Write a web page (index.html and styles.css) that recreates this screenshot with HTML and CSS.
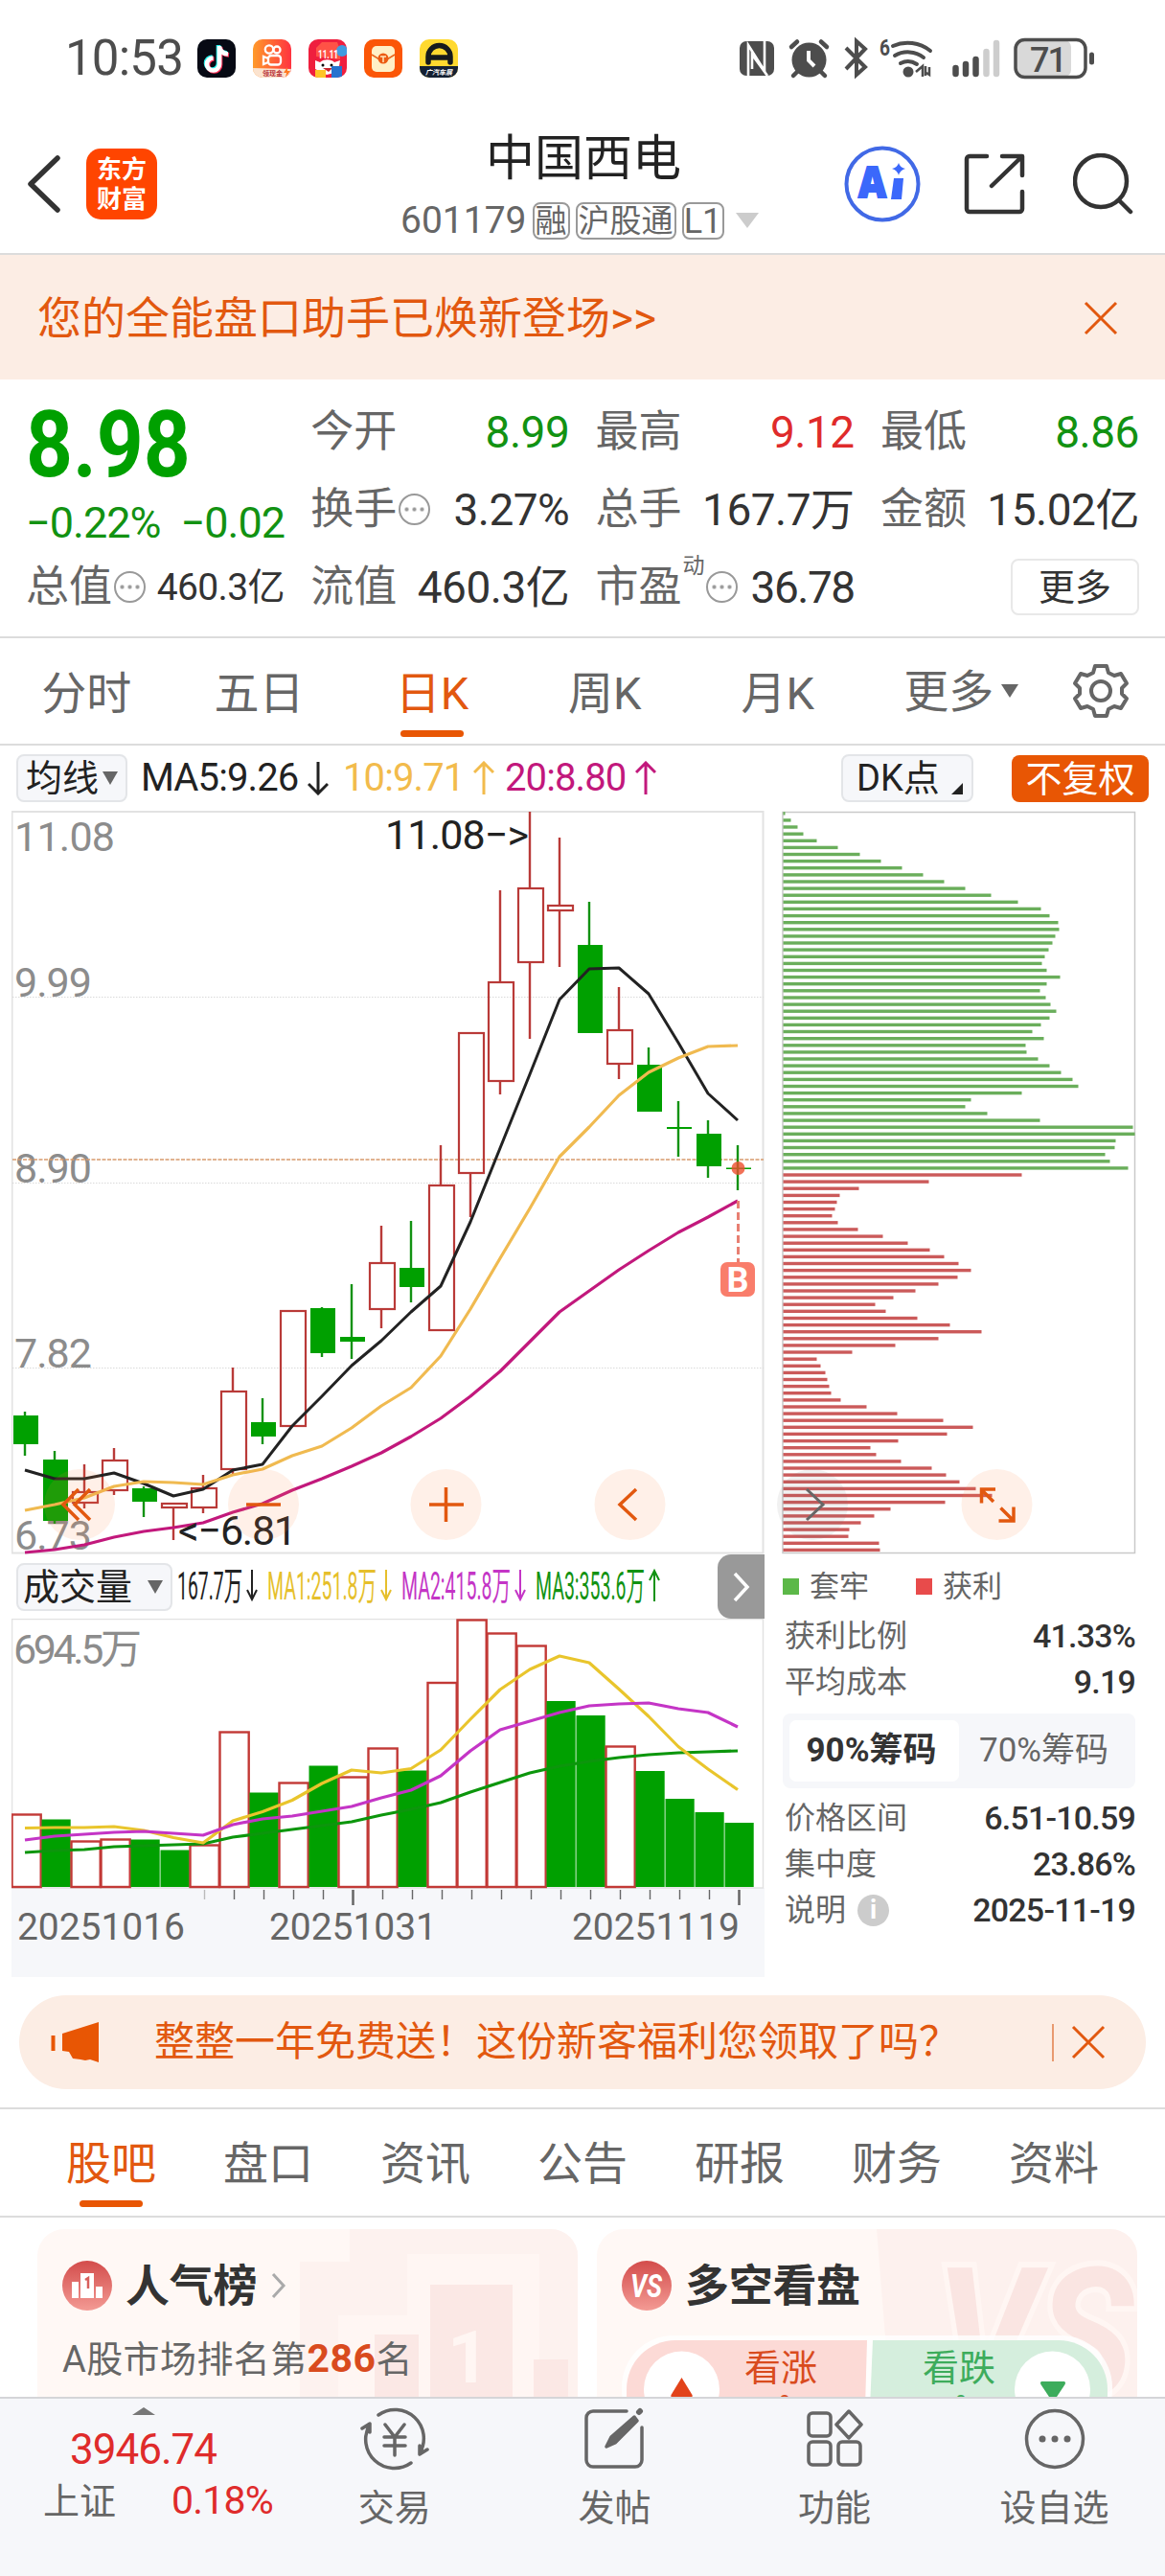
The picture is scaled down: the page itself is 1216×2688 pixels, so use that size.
FILE: index.html
```html
<!DOCTYPE html>
<html lang="zh-CN">
<head>
<meta charset="utf-8">
<title>中国西电 601179</title>
<link rel="stylesheet" href="styles.css">
</head>
<body>
<div class="status">
  <span class="clock">10:53</span>
  <div class="apps">
    <svg width="40" height="40" viewBox="0 0 40 40"><rect width="40" height="40" rx="10" fill="#070a14"/><g fill="none" stroke-width="4.6"><path d="M22 6v19a6.500 6.500 0 1 1-6.500-6.500M22 7c1 5 4 7 9 7.500" stroke="#25f4ee"/><path d="M24 8v19a6.500 6.500 0 1 1-6.500-6.500M24 9c1 5 4 7 9 7.500" stroke="#fe2c55"/><path d="M23 7v19a6.500 6.500 0 1 1-6.500-6.500M23 8c1 5 4 7 9 7.500" stroke="#fff"/></g></svg>
    <svg width="40" height="40" viewBox="0 0 40 40"><defs><linearGradient id="ks"><stop offset="0" stop-color="#ff9a2a"/><stop offset="1" stop-color="#ff3340"/></linearGradient><clipPath id="r"><rect width="40" height="40" rx="10"/></clipPath></defs><g clip-path="url(#r)"><rect width="40" height="40" fill="url(#ks)"/><path d="M0 30l40 1v9H0z" fill="#fbe3cf"/></g><g fill="none" stroke="#fff" stroke-width="2.300"><circle cx="17" cy="10.500" r="4.200"/><circle cx="25" cy="11" r="3.500"/><rect x="16" y="17" width="13" height="9.500" rx="3"/><path d="M16 20l-5-2v8l5-2"/></g><text x="10" y="38" font-size="7" font-weight="700" fill="#b8323a">领现金</text><path d="M36 29l-4 6h3l-1 5 5-7h-3z" fill="#ff7a22"/></svg>
    <svg width="40" height="40" viewBox="0 0 40 40"><g clip-path="url(#r)"><rect width="40" height="40" fill="#ef1f3e"/><path d="M8 18V9l6-6h16l3 8v10z" fill="#ff5246"/><circle cx="35" cy="12" r="6" fill="#409be0"/><path d="M7 31V22l5 2c5-4 12-3 15 0l6-2-2 12-12 3z" fill="#fff"/><circle cx="15" cy="27" r="1.500"/><circle cx="24" cy="27" r="1.500"/><path d="M15 30h10l-4 4z" fill="#c8232b"/><path d="M7 32h11v8H7z" fill="#ffc426"/><path d="M24 28h11v12H24z" fill="#2572cf"/></g><text x="10" y="20" font-size="12" font-weight="700" fill="#fff" textLength="21" lengthAdjust="spacingAndGlyphs">11.11</text></svg>
    <svg width="40" height="40" viewBox="0 0 40 40"><rect width="40" height="40" rx="10" fill="#fb5607"/><rect x="8" y="7" width="24" height="27" rx="5" fill="#fff0c7"/><path d="M8 16l8 5h8l8-5" fill="none" stroke="#e8651b" stroke-width="1.500"/><circle cx="20" cy="20" r="5.500" fill="#ec5b12"/><path d="M17 18h6M20 18v6" stroke="#ffe6ba" stroke-width="1.500"/></svg>
    <svg width="40" height="40" viewBox="0 0 40 40"><g clip-path="url(#r)"><rect width="40" height="40" fill="#ffd92f"/><path d="M0 28h40v12H0z" fill="#142033"/></g><path d="M9 24V18a11 11 0 0 1 23 0v6M11 19h19" fill="none" stroke="#161a1d" stroke-width="5.500" stroke-linecap="round"/><text x="6" y="36.500" font-size="7" font-weight="700" font-style="italic" fill="#fff">广汽车展</text></svg>
  </div>
  <svg class="sys" width="372" height="46" viewBox="770 38 372 46">
    <rect x="772" y="43" width="36" height="36" rx="7" fill="#4d4d4d"/><path d="M781 79V47l17 27V43" fill="none" stroke="#fff" stroke-width="2.600"/><path d="M785 72V57l16 22" fill="none" stroke="#fff" stroke-width="2.600"/>
    <g stroke="#4d4d4d" fill="none"><circle cx="844.500" cy="62.500" r="18" fill="#4d4d4d" stroke="none"/><path d="M826 49l6-5.500M863 49l-6-5.500M833 74l-5 5M856 74l5 5" stroke-width="4.500" stroke-linecap="round"/><path d="M844 53v10l6 6" stroke="#fff" stroke-width="4"/>
    <path d="M883 50l20 20-9 8V43l9 8-20 21" stroke-width="4"/>
    <path d="M932 48a38 38 0 0 1 39 5M934 58a27 27 0 0 1 30 2M940 66a17 17 0 0 1 17 1" stroke-width="4" stroke-linecap="round"/><circle cx="948" cy="75" r="5.500" fill="#4d4d4d" stroke="none"/><path d="M956 75l7-6v11M966 79V69M970 70v8l-3-2" stroke-width="2.500"/></g>
    <text x="918" y="58" font-size="23" font-weight="700" fill="#4d4d4d" textLength="11" lengthAdjust="spacingAndGlyphs">6</text>
    <g stroke-width="6.500" stroke-linecap="round" stroke="#4d4d4d"><path d="M997.500 71v6M1008 67v10M1018.500 62v15"/><path d="M1029.500 54v23M1040 45v32" stroke="#cdcdcd"/></g>
    <rect x="1061" y="42" width="57" height="38" rx="7" fill="#d9d9d9"/><rect x="1060" y="41.500" width="73" height="39" rx="9.500" fill="none" stroke="#4d4d4d" stroke-width="3.500"/><path d="M1139.500 57v8" stroke="#4d4d4d" stroke-width="5" stroke-linecap="round"/>
    <text x="1075" y="74.500" font-size="36" font-weight="500" fill="#4d4d4d" textLength="39">71</text>
  </svg>
</div>

<header class="head">
  <div class="head-left">
    <svg width="36" height="60" viewBox="0 0 36 60"><path d="M32 3L4 30l28 27" fill="none" stroke="#333" stroke-width="5.500" stroke-linecap="round" stroke-linejoin="round"/></svg>
    <div class="logo"><span>东方</span><span>财富</span></div>
  </div>
  <div class="head-mid">
    <h1>中国西电</h1>
    <div class="code"><span>601179</span><i>融</i><i>沪股通</i><i class="lv">L1</i><b class="caret"></b></div>
  </div>
  <div class="head-right">
    <svg width="80" height="80" viewBox="0 0 80 80"><circle cx="40" cy="40" r="37.500" fill="none" stroke="#4169e6" stroke-width="4"/><text x="15" y="54" font-family="Open Sans" font-size="44" font-weight="800" fill="#3b68fb" stroke="#3b68fb" stroke-width="2" textLength="29" lengthAdjust="spacingAndGlyphs">A</text><path d="M52 34h10l-2 22H49z" fill="#3b68fb"/><path d="M57 18q1.500 5 7 6-5.500 1.500-7 7-1.500-5.500-7-7 5.500-1 7-6z" fill="#3b68fb"/></svg>
    <svg width="64" height="64" viewBox="0 0 64 64"><g fill="none" stroke="#333" stroke-width="4.500" stroke-linecap="round" stroke-linejoin="round"><path d="M24 3H6a3 3 0 0 0-3 3v52a3 3 0 0 0 3 3h52a3 3 0 0 0 3-3V40M40 3h21v20M59 5L29 34"/></g></svg>
    <svg width="64" height="64" viewBox="0 0 64 64"><circle cx="29" cy="29" r="27" fill="none" stroke="#333" stroke-width="4.500"/><path d="M48 49l12 12" stroke="#333" stroke-width="4.500" stroke-linecap="round"/></svg>
  </div>
</header>

<div class="banner"><span>您的全能盘口助手已焕新登场&gt;&gt;</span><svg width="36" height="36" viewBox="0 0 36 36"><path d="M2 2l32 32M34 2L2 34" stroke="#e2580f" stroke-width="3"/></svg></div>

<section class="quote">
  <div class="q-price">
    <div class="big">8.98</div>
    <div class="chg"><span>−0.22%</span><span>−0.02</span></div>
    <div class="cell small"><label>总值</label><em class="dots"></em><span>460.3亿</span></div>
  </div>
  <div class="q-col">
    <div class="cell"><label>今开</label><span class="dn">8.99</span></div>
    <div class="cell"><label>换手</label><em class="dots"></em><span>3.27%</span></div>
    <div class="cell"><label>流值</label><span>460.3亿</span></div>
  </div>
  <div class="q-col">
    <div class="cell"><label>最高</label><span class="up">9.12</span></div>
    <div class="cell"><label>总手</label><span>167.7万</span></div>
    <div class="cell"><label>市盈</label><sup>动</sup><em class="dots"></em><span class="pe">36.78</span></div>
  </div>
  <div class="q-col">
    <div class="cell"><label>最低</label><span class="dn">8.86</span></div>
    <div class="cell"><label>金额</label><span>15.02亿</span></div>
    <div class="cell"><button class="more">更多</button></div>
  </div>
</section>

<nav class="tabs">
  <a>分时</a><a>五日</a><a class="on">日K</a><a>周K</a><a>月K</a><a class="last">更多<b></b></a>
  <svg width="60" height="60" viewBox="-30 -30 60 60"><g fill="none" stroke="#666" stroke-width="4" stroke-linejoin="round"><circle r="10"/><path d="M-6-26H6L8-19L14-16L21-18L27-8L22-3V3L27 8L21 18L14 16L8 19L6 26H-6L-8 19L-14 16L-21 18L-27 8L-22 3V-3L-27-8L-21-18L-14-16L-8-19Z"/></g></svg>
</nav>

<div class="mabar">
  <span class="pill">均线<b></b></span>
  <span class="ma k">MA5:9.26<svg width="22" height="36" viewBox="0 0 22 36"><path d="M11 1v33M1 24l10 10 10-10"/></svg></span>
  <span class="ma y">10:9.71<svg width="22" height="36" viewBox="0 0 22 36"><path d="M11 35V2M1 12L11 2l10 10"/></svg></span>
  <span class="ma p">20:8.80<svg width="22" height="36" viewBox="0 0 22 36"><path d="M11 35V2M1 12L11 2l10 10"/></svg></span>
  <span class="pill dk">DK点<b></b></span>
  <span class="adj">不复权</span>
</div>

<main class="charts">
  <div class="kline">
    <svg class="price" width="786" height="776" viewBox="12 846 786 776">
      <rect x="12.500" y="847" width="784" height="773.500" fill="none" stroke="#e2e2e2" stroke-width="2"/>
      <path d="M13 1040.500h784M13 1234.500h784M13 1427.500h784" stroke="#dadada" stroke-dasharray="1.500 1.500"/>
      <g class="axis"><text x="15" y="888" textLength="105">11.08</text><text x="15" y="1040" textLength="81">9.99</text><text x="15" y="1234" textLength="81">8.90</text><text x="15" y="1427" textLength="81">7.82</text><text x="15" y="1616.500" textLength="81">6.73</text></g>
      <path d="M13 1210h784" stroke="#d79a6c" stroke-width="1.500" stroke-dasharray="4 1.500"/>
      <g id="candles"></g>
      <g id="ma"></g>
      <path d="M770.500 1253v64" stroke="#e87f72" stroke-width="3" stroke-dasharray="8 4"/>
      <circle cx="770.500" cy="1219" r="7" fill="#ee4d2d" fill-opacity=".8"/>
      <rect x="752" y="1317" width="36" height="36" rx="7" fill="#f97d6b"/>
      <text x="770" y="1348" text-anchor="middle" font-size="36" font-weight="700" fill="#fff">B</text>
      <g class="mark"><text x="402" y="886" textLength="150">11.08−&gt;</text><text x="186" y="1612" textLength="124">&lt;−6.81</text></g>
      <g fill="#ff8340" fill-opacity=".12"><circle cx="83" cy="1570" r="37"/><circle cx="275" cy="1570" r="37"/><circle cx="465.500" cy="1570" r="37"/><circle cx="657.500" cy="1570" r="37"/></g>
      <g fill="none" stroke="#e2580f" stroke-width="3.500"><path d="M82 1554l-16 16 16 16M94 1554l-16 16 16 16M257 1570h36M448 1570h36M465.500 1552v36M664 1554l-17 16 17 16"/></g>
    </svg>
    <div class="volhead">
      <span class="pill vol">成交量<b></b></span>
      <svg width="510" height="50" viewBox="182 1630 510 50" font-size="40"><g fill="#222"><text x="185" y="1668" textLength="68" lengthAdjust="spacingAndGlyphs">167.7万</text><text x="279" y="1668" fill="#e6bf2c" textLength="114" lengthAdjust="spacingAndGlyphs">MA1:251.8万</text><text x="419" y="1668" fill="#c435c6" textLength="114" lengthAdjust="spacingAndGlyphs">MA2:415.8万</text><text x="559" y="1668" fill="#129212" textLength="114" lengthAdjust="spacingAndGlyphs">MA3:353.6万</text></g><g fill="none" stroke-width="2"><path stroke="#222" d="M263 1637v31M258 1658l5 10 5-10"/><path stroke="#e6bf2c" d="M403 1637v31M398 1658l5 10 5-10"/><path stroke="#c435c6" d="M543 1637v31M538 1658l5 10 5-10"/><path stroke="#129212" d="M683 1670v-32M678 1648l5-10 5 10"/></g></svg>
      <span class="next"><svg width="20" height="32" viewBox="0 0 20 32"><path d="M3 2l13 14L3 30" fill="none" stroke="#fff" stroke-width="3.500"/></svg></span>
    </div>
    <svg class="volume" width="786" height="374" viewBox="12 1689 786 374">
      <rect x="12" y="1970" width="786" height="93" fill="#f6f7fa"/>
      <rect x="12.500" y="1689.500" width="784" height="280.500" fill="#fff" stroke="#e2e2e2" stroke-width="1.500"/>
      <g id="vols"></g><g id="volma"></g><g id="ticks"></g>
      <g class="axis"><text x="14" y="1736" textLength="134">694.5万</text></g>
      <g class="dates"><text x="18" y="2024" textLength="175">20251016</text><text x="281" y="2024" textLength="175">20251031</text><text x="597" y="2024" textLength="175">20251119</text></g>
    </svg>
  </div>
  <aside class="chips">
    <svg width="369" height="776" viewBox="817 846 369 776">
      <path d="M817 847.500h367.500v773H817z" fill="none" stroke="#c9c9c9" stroke-width="1.500"/>
      <g id="chipbars"></g>
      <circle cx="848" cy="1570" r="37" fill="#777" fill-opacity=".1"/><path d="M842 1554l17 16-17 16" fill="none" stroke="#666" stroke-width="3"/>
      <circle cx="1040.500" cy="1570" r="37" fill="#ff8340" fill-opacity=".12"/>
      <path d="M1024.500 1568.500v-14.500h14.500M1025 1555l12 12M1058 1572.500v14.500h-15.500M1057 1586l-12.500-12.500" fill="none" stroke="#e2580f" stroke-width="3.500"/>
    </svg>
    <div class="legend"><i class="g"></i>套牢<i class="r"></i>获利</div>
    <dl><dt>获利比例</dt><dd>41.33%</dd></dl>
    <dl><dt>平均成本</dt><dd>9.19</dd></dl>
    <div class="seg"><b>90%筹码</b><span>70%筹码</span></div>
    <dl><dt>价格区间</dt><dd>6.51-10.59</dd></dl>
    <dl><dt>集中度</dt><dd>23.86%</dd></dl>
    <dl><dt>说明<em>i</em></dt><dd>2025-11-19</dd></dl>
  </aside>
</main>

<div class="promo">
  <svg width="50" height="42" viewBox="0 0 50 42"><path d="M12 12L50 0v42l-9-3-5 1-5-1-8-1-4-7-7-1z" fill="#e85604"/><path d="M2.500 14v16" stroke="#e85604" stroke-width="4"/></svg>
  <span>整整一年免费送！这份新客福利您领取了吗？</span>
  <i></i>
  <svg width="36" height="36" viewBox="0 0 36 36"><path d="M2 2l32 32M34 2L2 34" stroke="#e2580f" stroke-width="3"/></svg>
</div>

<nav class="subtabs"><a class="on">股吧</a><a>盘口</a><a>资讯</a><a>公告</a><a>研报</a><a>财务</a><a>资料</a></nav>

<section class="cards">
  <div class="card">
    <svg class="deco" width="290" height="175" viewBox="0 0 290 175"><path d="M52 0h238v175H0V34h52z" fill="#fdf2ef"/><path d="M112 26h138v149H112zM40 90h72v85H40z" fill="#fff6f3"/><path d="M136 58h86v117h-86zM78 110h46v65H78zM244 136h36v39h-36z" fill="#fbe8e5"/><text x="154" y="160" font-size="76" font-weight="700" fill="#fff6f3">1</text></svg>
    <div class="card-h"><svg width="52" height="52" viewBox="0 0 52 52"><defs><linearGradient id="red" x2="0" y2="1"><stop offset="0" stop-color="#d34c4b"/><stop offset="1" stop-color="#f39a94"/></linearGradient></defs><circle cx="26" cy="26" r="26" fill="url(#red)"/><path d="M10 22h7v17h-7zM19 13h14v26H19zM35 27h7v12h-7z" fill="#fff"/><path d="M24 20l3-2v11" fill="none" stroke="#d85f5c" stroke-width="2.500"/></svg><h2>人气榜</h2><svg width="16" height="28" viewBox="0 0 16 28"><path d="M2 2l11 12L2 26" fill="none" stroke="#aaa" stroke-width="3"/></svg></div>
    <p>A股市场排名第<b>286</b>名</p>
  </div>
  <div class="card">
    <svg class="deco" width="272" height="175" viewBox="0 0 272 175"><path d="M0 0h272v175H14z" fill="#fdf1ee"/><text x="62" y="176" font-weight="700" font-style="italic" font-size="190" fill="#fae5e2" stroke="#fff6f3" stroke-width="12" paint-order="stroke" textLength="206" lengthAdjust="spacingAndGlyphs">VS</text></svg>
    <div class="card-h"><svg width="52" height="52" viewBox="0 0 52 52"><circle cx="26" cy="26" r="26" fill="url(#red)"/><text x="9" y="38" font-size="34" font-weight="700" font-style="italic" fill="#fff" textLength="33" lengthAdjust="spacingAndGlyphs">VS</text></svg><h2>多空看盘</h2></div>
    <svg class="vote" width="512" height="64" viewBox="649 2437 512 64">
      <rect x="649" y="2437" width="512" height="110" rx="54" fill="#fff" fill-opacity=".8"/>
      <path d="M905 2442H705a51 51 0 0 0-51 51v20h249z" fill="#fcdad6"/><path d="M911 2442h194a51 51 0 0 1 51 51v20H908z" fill="#d5eedd"/>
      <circle cx="711.500" cy="2493" r="39.500" fill="#fff"/><circle cx="1098.500" cy="2493" r="39.500" fill="#fff"/>
      <path d="M711.500 2481l11 18q1 3-3 3h-16q-4 0-3-3z" fill="#e2431a"/><path d="M1087 2485h24q2 1 0 4l-12 18-12-18q-2-3 0-4z" fill="#3dac5c"/>
      <g font-size="38"><text x="777" y="2484" fill="#d94b1e">看涨</text><text x="963" y="2484" fill="#3dac5c">看跌</text><text x="813" y="2520" font-size="30" fill="#d94b1e">%</text><text x="997" y="2520" font-size="30" fill="#3dac5c">%</text></g>
    </svg>
  </div>
</section>

<footer class="bottom">
  <div class="index"><b></b><strong>3946.74</strong><div><span>上证</span><em>0.18%</em></div></div>
  <a><svg width="74" height="66" viewBox="-37 -33 74 66"><path d="M-17-25A30 30 0 0 1 26 15M17 25A30 30 0 0 1-26-15M-34-11l8-5v9M34 11l-8 5V7M-10-15L0-2 10-15M0-2V17M-11-2h22M-11 7h22"/></svg>交易</a>
  <a><svg width="66" height="66" viewBox="-33 -33 66 66"><path d="M13-29H-22a7 7 0 0 0-7 7V22a7 7 0 0 0 7 7H22a7 7 0 0 0 7-7V-12"/><path d="M-8 8L-3-2 21-23l3 4L1 4z" fill="#666"/><path d="M26-28l1-1" stroke-width="6"/></svg>发帖</a>
  <a><svg width="66" height="66" viewBox="-33 -33 66 66"><rect x="-27" y="-27" width="23" height="24" rx="4"/><rect x="-27" y="3" width="23" height="24" rx="4"/><rect x="4" y="3" width="23" height="24" rx="4"/><path d="M15-29l13 14-13 14L2-15z"/></svg>功能</a>
  <a><svg width="66" height="66" viewBox="-33 -33 66 66"><circle r="29.500"/><g fill="#666" stroke="none"><circle cx="-13" r="3.500"/><circle r="3.500"/><circle cx="13" r="3.500"/></g></svg>设自选</a>
</footer>
<script src="chart.js"></script>
</body>
</html>
```
FILE: styles.css
```css
* { box-sizing: border-box; margin: 0; padding: 0; }
body { width: 1216px; height: 2688px; overflow: hidden; background: #fff; color: #333; font-family: Roboto, "Noto Sans CJK SC", sans-serif; font-size: 46px; line-height: 1; }
svg { display: block; flex: none; }
i, em { font-style: normal; }
a, i, span, label, b, dd { white-space: nowrap; }

.status { height: 120px; padding: 2px 74px 0 68px; display: flex; align-items: center; }
.clock { width: 138px; font-size: 51px; line-height: 60px; letter-spacing: -0.8px; color: #4d4d4d; }
.apps { display: flex; gap: 18px; }
.sys { margin-left: auto; }

.head { height: 146px; display: grid; grid-template-columns: 418px 382px 1fr; align-items: center; border-bottom: 2px solid #dcdcdc; }
.head-left { display: flex; align-items: center; gap: 26px; padding-left: 28px; }
.logo { width: 74px; height: 74px; border-radius: 15px; background: #ff4500; color: #fff; display: flex; flex-direction: column; align-items: center; justify-content: center; gap: 5px; font-size: 26px; font-weight: 700; }
.head-mid { padding-top: 8px; }
.head-mid h1 { font-size: 51px; font-weight: 400; line-height: 64px; text-align: center; color: #222; padding-top: 4px; }
.code { display: flex; align-items: center; height: 64px; font-size: 39px; color: #666; }
.code i { flex: none; height: 39px; border: 2px solid #999; border-radius: 8px; padding: 0 1px; margin-left: 6px; font-size: 33px; line-height: 36px; }
.code .lv { padding: 0; width: 44px; font-size: 36px; text-align: center; }
.code span { line-height: 48px; }
.caret { margin-left: 12px; border: 12px solid transparent; border-top: 16px solid #ccc; border-bottom: 0; }
.head-right { display: flex; align-items: center; padding-left: 81px; }
.head-right svg + svg { margin-left: 45px; }
.head-right svg + svg + svg { margin-left: 50px; }

.banner { height: 130px; background: #fcede4; display: flex; align-items: center; justify-content: space-between; padding: 2px 49px 0 39px; color: #e2580f; }

.quote { height: 270px; border-bottom: 2px solid #dcdcdc; display: grid; grid-template-columns: repeat(4, 270px); column-gap: 27.3px; padding: 14px 27px 0; align-items: start; }
.q-col { display: grid; grid-template-rows: repeat(3, 81px); }
.q-price { display: grid; grid-template-rows: 109px 53px 81px; }
.big { font-size: 96px; font-weight: 700; line-height: 108px; color: #00a000; transform: scaleX(.89); transform-origin: left; }
.chg { display: flex; justify-content: space-between; align-items: center; font-size: 45px; letter-spacing: -1px; color: #129212; }
.cell { display: flex; align-items: center; height: 81px; }
.cell label { font-size: 45px; color: #666; line-height: 1.1; padding-top: 1px; }
.cell span { margin-left: auto; letter-spacing: -.5px; line-height: 1.1; padding-top: 1px; }
.cell.small span { font-size: 39px; letter-spacing: -.6px; }
.cell .dn { color: #129212; }
.cell .up { color: #df2b2b; }
.cell .pe { letter-spacing: -1.500px; }
.cell sup { font-size: 23px; color: #666; align-self: flex-start; padding-top: 7px; margin-left: 1px; }
.dots { width: 33px; height: 33px; margin-left: 2px; border: 2px solid #999; border-radius: 50%; background: radial-gradient(circle, #999 1.800px, transparent 2.300px) center / 8px 30px repeat-x; background-clip: content-box; padding: 0 3px; }
.cell sup + .dots { margin-left: 1px; }
.more { margin-left: auto; width: 134px; height: 59px; border: 2px solid #e8e8e8; border-radius: 8px; background: #fff; font: 38px/50px Roboto, "Noto Sans CJK SC", sans-serif; color: #333; }

.tabs { height: 112px; display: flex; align-items: center; border-bottom: 2px solid #dcdcdc; }
.tabs a { width: 180.400px; height: 110px; line-height: 115px; text-align: center; font-size: 47px; color: #666; }
.tabs a.on, .subtabs a.on { color: #e2580f; }
.on::after { content: ""; display: block; width: 66px; height: 7px; border-radius: 4px; background: #e85604; margin: -19px auto 0; }
.tabs .last { display: flex; align-items: center; justify-content: flex-end; padding-right: 19px; }
.last b { margin-left: 8px; border: 9px solid transparent; border-top: 14px solid #666; border-bottom: 0; }
.tabs svg { margin-left: 37px; }

.mabar { height: 68px; display: flex; align-items: center; padding: 0 17px; font-size: 40px; }
.pill { display: flex; align-items: center; height: 50px; border: 2px solid #e3e5e8; border-radius: 8px; background: #f6f7fa; font-size: 38px; line-height: 46px; color: #222; padding-left: 8px; width: 116px; }
.pill b { margin-left: 4px; border: 8px solid transparent; border-top: 14px solid #666; border-bottom: 0; }
.ma { display: flex; align-items: center; letter-spacing: -.9px; line-height: 48px; }
.ma svg { margin-left: 10px; fill: none; stroke: currentColor; stroke-width: 3px; }
.k { color: #222; margin-left: 14px; width: 211px; }
.y { color: #f2bb4c; width: 169px; }
.p { color: #c2187c; }
.dk { width: 138px; margin-left: auto; padding-left: 14px; }
.dk b { border: 0; border-bottom: 12px solid #222; border-left: 12px solid transparent; margin: 22px 0 0 12px; }
.adj { width: 143px; height: 49px; margin-left: 40px; border-radius: 8px; background: #e85604; color: #fff; font-size: 38px; line-height: 50px; text-align: center; }

.charts { height: 1217px; display: flex; padding-left: 12px; gap: 19px; }
.kline { width: 786px; }
.axis { font-size: 43px; fill: #8c8c8c; }
.mark { font-size: 43px; fill: #222; }
.dates { font-size: 39px; fill: #666; }
.volhead { height: 67px; display: flex; align-items: center; padding-left: 5px; }
.vol { width: 163px; padding-left: 5px; margin-right: 2px; }
.vol b { margin-left: 16px; }
.next { width: 49px; height: 67px; margin-left: auto; border-radius: 14px 0 0 14px; background: #999; display: flex; align-items: center; justify-content: center; }
.chips { width: 368px; }
.chips > svg { overflow: visible; }
.legend { display: flex; align-items: center; height: 61px; padding-top: 5px; font-size: 31px; color: #666; }
.legend i { width: 17px; height: 17px; margin-right: 11px; }
.legend .g { background: #5cb848; }
.legend .r { background: #e84b4b; margin-left: 49px; }
.chips dl { display: flex; justify-content: space-between; align-items: center; height: 48px; line-height: 40px; }
.chips dt { font-size: 32px; color: #666; padding-left: 2px; display: flex; align-items: center; }
.chips dd { font-size: 34px; font-weight: 500; letter-spacing: -.8px; }
.chips dt em { width: 33px; height: 33px; margin-left: 12px; border-radius: 50%; background: #ccc; color: #fff; font-size: 27px; font-weight: 700; line-height: 33px; text-align: center; }
.seg { display: flex; height: 78px; margin: 9px 0 7px; padding: 7px; border-radius: 8px; background: #f6f7fa; font-size: 35px; line-height: 63px; text-align: center; color: #666; }
.seg b { width: 177px; border-radius: 7px; background: #fff; color: #333; padding-right: 6px; }
.seg span { flex: 1; }

.promo { height: 98px; margin: 19px 20px; padding: 0 42px 0 33px; border-radius: 49px; background: #fcede4; display: flex; align-items: center; font-size: 42px; color: #e2580f; }
.promo span { margin-left: 58px; width: 939px; line-height: 50px; }
.promo i { width: 2px; height: 39px; margin-right: 18px; background: #e89a70; }

.subtabs { height: 115px; border: solid #dcdcdc; border-width: 2px 0; padding: 0 34px; display: flex; }
.subtabs a { flex: 1; height: 111px; line-height: 113px; text-align: center; font-size: 47px; color: #666; }
.subtabs .on::after { margin-top: -18px; }

.cards { height: 187px; padding: 12px 29px 0 39px; display: flex; gap: 20px; overflow: hidden; }
.card { position: relative; width: 564px; height: 260px; padding: 33px 26px; border-radius: 28px; background: #fff8f5; overflow: hidden; }
.deco { position: absolute; right: 0; top: 0; }
.card-h { position: relative; display: flex; align-items: center; height: 52px; }
.card-h h2 { font-size: 46px; margin: 0 15px 0 14px; letter-spacing: -.3px; }
.card p { position: relative; font-size: 38px; line-height: 50px; margin-top: 25px; color: #666; letter-spacing: .4px; }
.card p b { color: #d94b1e; font-size: 41px; }
.vote { position: relative; margin-top: 26px; }

.bottom { height: 188px; border-top: 2px solid #d5d5d8; background: #f6f7fa; display: flex; }
.bottom a { width: 229.600px; padding-top: 9px; display: flex; flex-direction: column; align-items: center; gap: 20px; font-size: 38px; color: #666; }
.bottom a svg { fill: none; stroke: #666; stroke-width: 3.500px; stroke-linecap: round; stroke-linejoin: round; }
.index { width: 297px; padding: 9px 0 0 45px; display: flex; flex-direction: column; color: #df2b2b; }
.index b { width: 24px; margin-left: 93px; border: 12px solid transparent; border-bottom: 8px solid #777; border-top: 0; }
.index strong { font-size: 44px; font-weight: 400; letter-spacing: -1px; margin: 14px 0 0 28px; }
.index div { display: flex; justify-content: space-between; align-items: center; width: 240px; margin-top: 11px; font-size: 38px; }
.index span { color: #666; }
.index em { font-size: 41px; letter-spacing: -.8px; }
```
FILE: chart.js
```js
const make = (id, markup) => { document.getElementById(id).innerHTML = markup; };
const x0 = 26, step = 31;

// [direction, wick top, wick bottom, body top, body bottom]
const candles = [
  ['g',1473,1519,1477,1507],['g',1514,1590,1523,1587],['r',1528,1574,1557,1568],['r',1511,1560,1524,1555],
  ['g',1551,1583,1553,1567],['r',1568,1607,1569,1573],['r',1539,1579,1553,1573],['r',1427,1540,1452,1533],
  ['g',1459,1507,1484,1499],['r',1368,1488,1368,1488],['g',1364,1416,1365,1412],['g',1340,1418,1395,1400],
  ['r',1279,1386,1318,1366],['g',1274,1359,1323,1343],['r',1195,1389,1237,1388],['r',1078,1270,1078,1224],
  ['r',929,1142,1025,1128],['r',847,1084,927,1004],['r',874,1009,945,950],['g',941,1078,986,1078],
  ['r',1030,1126,1075,1110],['g',1093,1160,1111,1160],['g',1149,1207,1176,1178],['g',1169,1229,1183,1217],['g',1195,1242,1218.5,1220]
];
make('candles', candles.map(([d, wt, wb, bt, bb], i) => {
  const x = x0 + i * step;
  return d === 'g'
    ? `<path d="M${x} ${wt}V${wb}" stroke="#129212" stroke-width="2.4"/><rect x="${x - 12}" y="${bt}" width="26" height="${bb - bt}" fill="#00a000"/>`
    : `<path d="M${x} ${wt}V${bt}M${x} ${bb}V${wb}" stroke="#b93a38" stroke-width="2.4"/><rect x="${x - 12}" y="${bt}" width="26" height="${bb - bt}" fill="none" stroke="#b93a38" stroke-width="2.2"/>`;
}).join(''));

const line = (ys, color, w) => `<polyline points="${ys.map((y, i) => `${x0 + i * step},${y}`).join(' ')}" fill="none" stroke="${color}" stroke-width="${w}" stroke-linejoin="round"/>`;
make('ma',
  line([1534,1543,1543,1537,1548,1561,1554,1534,1528,1488,1457,1425,1399,1369,1342,1275,1198,1121,1043,1011,1010,1037,1088,1141,1169], '#222', 3) +
  line([1576,1570,1563,1551,1546,1547,1549,1539,1533,1519,1509,1490,1467,1448,1415,1366,1313,1261,1207,1176,1143,1119,1104,1092,1091], '#f0ba50', 3.2) +
  line([1620,1617,1612,1604,1598,1594,1589,1578,1569,1555,1543,1530,1516,1499,1480,1457,1431,1400,1369,1347,1325,1305,1286,1270,1253], '#c2187c', 3.2));

const volumes = [1893.5,1898.5,1921.5,1919.5,1919.5,1930.5,1925.5,1807.5,1870.5,1860.5,1842.5,1854.5,1824.5,1847.5,1756,1690.5,1704.5,1717.5,1775,1790,1822.5,1848,1877,1891,1902];
const volDir = 'rgrrggrrgrgrrgrrrrggrgggg';
make('vols', volumes.map((y, i) => {
  const x = 12.5 + i * step;
  return volDir[i] === 'g'
    ? `<rect x="${x}" y="${y}" width="30.2" height="${1969 - y}" fill="#00a000"/>`
    : `<rect x="${x}" y="${y}" width="30.2" height="${1969 - y}" fill="#fff" stroke="#c23936" stroke-width="2.4"/>`;
}).join(''));
make('volma',
  line([1933,1931,1930,1927,1926,1925,1924,1917,1913,1909,1905,1901,1894,1888,1881,1870,1860,1850,1843,1838,1834,1831,1829,1828,1827], '#0c960c', 3.2) +
  line([1907.5,1907,1907,1906,1910,1917.5,1923,1900,1890.5,1878.5,1861,1847,1850,1845.5,1826,1794,1763,1742,1728,1735,1762.5,1791,1822.5,1846,1867.5], '#e9c52c', 3.2) +
  line([1920,1916,1914,1912,1911,1913,1915,1904,1898,1895,1890,1885,1876,1868,1853,1827,1805,1796,1787,1780,1778,1777,1783,1787,1802], '#c435c6', 3.2));

let ticks = '';
for (let i = 0; i < 19; i++) {
  const major = i === 5 || i === 18;
  ticks += `<path d="M${213.5 + i * step} 1972v${major ? 16 : 10}" stroke="${i ? '#666' : '#bbb'}" stroke-width="${major ? 2.5 : 1.4}"/>`;
}
make('ticks', ticks);

const trapped = [2,8,15,21,35,57,80,102,124,146,168,190,217,245,269,278,287,288,284,281,277,273,270,275,289,275,268,274,279,285,278,269,260,272,253,254,266,278,290,302,308,249,196,190,213,268,365,367,347,346,336,341,360];
const profit = [249,152,79,59,56,54,51,57,78,104,130,153,168,183,196,182,162,138,115,96,107,140,174,207,162,117,72,35,39,44,46,48,50,60,87,119,167,198,171,120,91,97,123,155,170,184,201,218,169,112,95,81,69,68,100,101];
make('chipbars', trapped.concat(profit).map((w, i) =>
  `<rect x="817.5" y="${(847.1 + i * 7.117).toFixed(1)}" width="${w}" height="3.4" fill="${i < trapped.length ? '#6aae5b' : '#cb5a5a'}"/>`).join(''));
```
